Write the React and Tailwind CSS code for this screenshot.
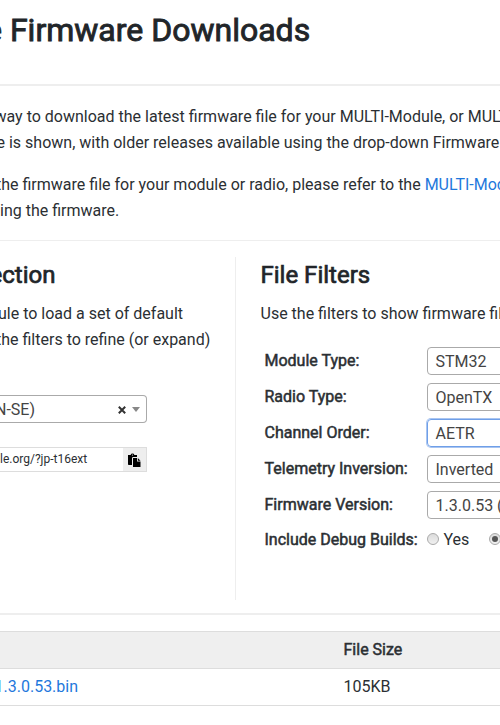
import { clsx } from "clsx";

const filters = [
  { label: "Module Type:", value: "STM32" },
  { label: "Radio Type:", value: "OpenTX" },
  { label: "Channel Order:", value: "AETR", focused: true },
  { label: "Telemetry Inversion:", value: "Inverted" },
  { label: "Firmware Version:", value: "1.3.0.53 (Latest)" },
];

// Regular weight thickened with a stroke, so the glyph widths stay the same
function Strong({ children }) {
  return <span className="font-normal [-webkit-text-stroke:0.5px_currentColor]">{children}</span>;
}

function PasteIcon() {
  return (
    <svg width="13" height="14" viewBox="0 0 13 14" fill="#000">
      <path d="M0 2h2.6a2 2 0 0 1 3.800 0H9v2H5.200A1.200 1.200 0 0 0 4 5.200V12H.8A.8.8 0 0 1 0 11.200z" />
      <path d="M5 5h4v3.500h3.500V14H5z" />
      <path d="M9.800 5l2.700 2.700H9.800z" />
      <circle cx="4.500" cy="2" r=".6" fill="#eee" />
    </svg>
  );
}

function Radio({ checked }) {
  return (
    <span className="-mt-[3px] flex h-3 w-3 shrink-0 items-center justify-center rounded-full border border-[#aaa] bg-linear-to-b from-[#dcdcdc] to-[#f0f0f0]">
      {checked && <span className="h-1.5 w-1.5 rounded-full bg-[#555]" />}
    </span>
  );
}

export default function App() {
  return (
    <div className="h-[725px] w-[500px] overflow-hidden bg-white font-[Roboto,sans-serif] text-base leading-[26px] whitespace-nowrap text-[#2b2f33]">
      {/* Title */}
      <div className="h-[84px] pt-[11px]">
        <h2 className="-ml-[15px] text-[32px] leading-[38px] text-[#212529] [-webkit-text-stroke:0.9px_currentColor]">
          e Firmware Downloads
        </h2>
      </div>
      <hr className="h-0.5 border-0 bg-[#eee]" />

      {/* Intro */}
      <div className="h-[154px] pt-[18px]">
        <p className="-ml-[5.5px]">way to download the latest firmware file for your MULTI-Module, or MULTI</p>
        <p className="-ml-[3.5px]">e is shown, with older releases available using the drop-down Firmware</p>
        <p className="mt-4 -ml-[4px]">
          the firmware file for your module or radio, please refer to the{" "}
          <a className="text-[#1f78dc]">MULTI-Module</a>
        </p>
        <p>ing the firmware.</p>
      </div>
      <hr className="h-px border-0 bg-[#eee]" />

      <div className="mt-4 flex h-[343px]">
        {/* Module selection */}
        <div className="w-[236px] shrink-0 border-r border-[#eee]">
          <h4 className="-ml-[10.5px] pt-1 text-2xl leading-[29px] text-[#212529] [-webkit-text-stroke:0.7px_currentColor]">
            ection
          </h4>
          <p className="mt-[11px] -ml-[2px]">ule to load a set of default</p>
          <p className="-ml-[4px]">the filters to refine (or expand)</p>
          <div className="mt-[42px] flex h-7 w-[147px] items-center rounded-r border border-l-0 border-[#aaa] pr-1.5 text-[#444]">
            <span className="-ml-[5px] flex-1 pt-0.5">N-SE)</span>
            <svg width="8" height="8" viewBox="0 0 8 8" className="mr-1.5 mt-px" stroke="#333" strokeWidth="2">
              <path d="M.8.8l6.400 6.400M7.200.8L.8 7.200" />
            </svg>
            <svg width="8" height="5" viewBox="0 0 8 5" fill="#888">
              <path d="M0 0h8L4 5z" />
            </svg>
          </div>
          <div className="mt-6 flex h-[25px] w-[147px] border border-l-0 border-[#ddd]">
            <span className="flex-1 text-xs leading-[23px]">le.org/?jp-t16ext</span>
            <span className="flex w-[23px] items-center justify-center bg-[#eee]">
              <PasteIcon />
            </span>
          </div>
        </div>

        {/* File filters */}
        <div className="w-[264px] shrink-0 overflow-hidden pl-[24.5px]">
          <h4 className="pt-1 text-2xl leading-[29px] text-[#212529] [-webkit-text-stroke:0.7px_currentColor]">
            File Filters
          </h4>
          <p className="mt-[11px]">Use the filters to show firmware files</p>
          <div className="mt-5 flex flex-col gap-2 pl-1">
            {filters.map((f) => (
              <div key={f.label} className="flex h-7 items-center">
                <span className="w-[162.5px] shrink-0"><Strong>{f.label}</Strong></span>
                <div
                  className={clsx(
                    "flex h-7 w-[180px] shrink-0 items-center rounded border pt-0.5 pl-[7.5px] text-[#444]",
                    f.focused ? "border-[#6f9fe8] ring-1 ring-[#6f9fe8]/60" : "border-[#aaa]"
                  )}
                >
                  {f.value}
                </div>
              </div>
            ))}
          </div>
          <div className="mt-2 flex items-center pl-1">
            <span className="w-[162.5px] shrink-0"><Strong>Include Debug Builds:</Strong></span>
            <Radio />
            <span className="ml-[4.5px] w-[45.5px] shrink-0">Yes</span>
            <Radio checked />
          </div>
        </div>
      </div>

      {/* Files table */}
      <hr className="mt-[13px] h-0.5 border-0 bg-[#eee]" />
      <div className="mt-4 flex h-[38px] items-center border-y border-[#ddd] bg-[#efefef]">
        <span className="w-[343.5px]" />
        <Strong>File Size</Strong>
      </div>
      <div className="flex h-[37px] items-center border-b border-[#ddd]">
        <span className="w-[343.5px]">
          <a className="-ml-[5.5px] text-[#1f78dc]">1.3.0.53.bin</a>
        </span>
        <span>105KB</span>
      </div>
    </div>
  );
}
